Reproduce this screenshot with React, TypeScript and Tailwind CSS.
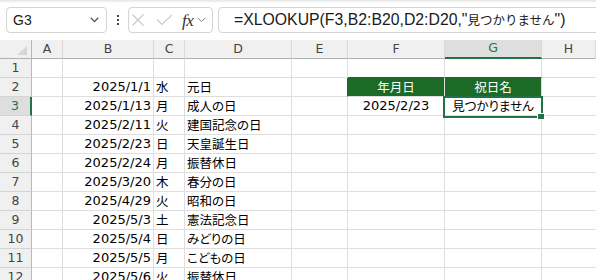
import React from "react";

const cols = ["A", "B", "C", "D", "E", "F", "G", "H"];

const data: [string, string, string][] = [
  ["2025/1/1", "水", "元日"],
  ["2025/1/13", "月", "成人の日"],
  ["2025/2/11", "火", "建国記念の日"],
  ["2025/2/23", "日", "天皇誕生日"],
  ["2025/2/24", "月", "振替休日"],
  ["2025/3/20", "木", "春分の日"],
  ["2025/4/29", "火", "昭和の日"],
  ["2025/5/3", "土", "憲法記念日"],
  ["2025/5/4", "日", "みどりの日"],
  ["2025/5/5", "月", "こどもの日"],
  ["2025/5/6", "火", "振替休日"],
];

const latin = "font-['DejaVu_Sans',sans-serif] text-[13px] text-black";
const cjk = "font-['Noto_Sans_CJK_JP',sans-serif] text-[12.5px] text-black [font-feature-settings:'palt']";
const GREEN = "bg-[#1b6a26]";

function Cell({ children, className = "" }: { children?: React.ReactNode; className?: string }) {
  return (
    <div className={`h-[19px] border-r border-b border-[#dedede] flex items-center overflow-visible whitespace-nowrap leading-[18px] ${className}`}>
      {children}
    </div>
  );
}

export default function App() {
  const rows: React.ReactNode[] = [];
  for (let r = 1; r <= 12; r++) {
    const sel = r === 3;
    rows.push(
      <div
        key={`h${r}`}
        className={`h-[19px] border-b border-[#d4d4d4] flex items-center justify-center font-['DejaVu_Sans',sans-serif] text-[12.5px] ${
          sel
            ? "bg-[#dedede] text-[#217346] border-r-2 border-r-[#217346]"
            : "bg-[#f0f0f0] text-[#444] border-r border-r-[#b8b8b8]"
        }`}
      >
        {r}
      </div>
    );
    const d = r >= 2 ? data[r - 2] : null;
    // A
    rows.push(<Cell key={`a${r}`} />);
    // B
    rows.push(
      <Cell key={`b${r}`} className={`justify-end pr-[2px] ${latin}`}>
        {d ? d[0] : ""}
      </Cell>
    );
    // C
    rows.push(
      <Cell key={`c${r}`} className={`pl-[2px] ${cjk}`}>
        {d ? d[1] : ""}
      </Cell>
    );
    // D
    rows.push(
      <Cell key={`d${r}`} className={`pl-[2px] ${cjk}`}>
        {d ? d[2] : ""}
      </Cell>
    );
    // E
    rows.push(<Cell key={`e${r}`} className={r === 2 ? "border-r-[#1b6a26]" : ""} />);
    // F
    if (r === 1) {
      rows.push(<Cell key={`f${r}`} className="border-b-[#1b6a26]" />);
    } else if (r === 2) {
      rows.push(
        <Cell key={`f${r}`} className={`${GREEN} border-[#1b6a26] justify-center font-['Noto_Sans_CJK_JP',sans-serif] text-[12.5px] text-white`}>
          年月日
        </Cell>
      );
    } else if (r === 3) {
      rows.push(
        <Cell key={`f${r}`} className={`justify-center ${latin}`}>
          2025/2/23
        </Cell>
      );
    } else {
      rows.push(<Cell key={`f${r}`} />);
    }
    // G
    if (r === 1) {
      rows.push(<Cell key={`g${r}`} className="border-b-[#1b6a26]" />);
    } else if (r === 2) {
      rows.push(
        <Cell key={`g${r}`} className={`${GREEN} border-[#1b6a26] justify-center font-['Noto_Sans_CJK_JP',sans-serif] text-[12.5px] text-white`}>
          祝日名
        </Cell>
      );
    } else if (r === 3) {
      rows.push(
        <Cell key={`g${r}`} className={`justify-center ${cjk}`}>
          見つかりません
        </Cell>
      );
    } else {
      rows.push(<Cell key={`g${r}`} />);
    }
    // H
    rows.push(<Cell key={`hh${r}`} className="border-r-0" />);
  }

  return (
    <div className="w-[596px] h-[280px] overflow-hidden bg-white relative">
      {/* top band */}
      <div className="h-[3px] bg-gradient-to-b from-[#e4e4e4] to-white" />
      {/* formula toolbar */}
      <div className="h-[37px] flex items-start pt-[4px]">
        {/* name box */}
        <div className="ml-[6px] w-[101px] h-[26px] border border-[#d4d4d4] rounded-[4px] flex items-center pl-[6px] pr-[6px] bg-white">
          <span className="font-['Liberation_Sans',sans-serif] text-[14px] text-[#1a1a1a] flex-1">G3</span>
          <svg width="9" height="6" viewBox="0 0 9 6" className="mr-[1px]">
            <path d="M0.8 0.8 L4.5 4.6 L8.2 0.8" fill="none" stroke="#4e5a36" strokeWidth="1.3" />
          </svg>
        </div>
        {/* ellipsis */}
        <div className="w-[21px] h-[26px] flex flex-col items-center justify-center gap-[2px]">
          <div className="w-[2px] h-[2px] bg-[#444]" />
          <div className="w-[2px] h-[2px] bg-[#444]" />
          <div className="w-[2px] h-[2px] bg-[#444]" />
        </div>
        {/* function box */}
        <div className="w-[85px] h-[26px] border border-[#d4d4d4] rounded-[4px] flex items-center bg-white">
          <svg width="14" height="14" viewBox="0 0 14 14" className="ml-[2px]">
            <path d="M1.5 1.5 L12.5 12.5 M12.5 1.5 L1.5 12.5" stroke="#c8c8c8" strokeWidth="1.1" fill="none" />
          </svg>
          <svg width="17" height="12" viewBox="0 0 17 12" className="ml-[11px]">
            <path d="M1 5.5 L6 10.5 L16 0.8" stroke="#c8c8c8" strokeWidth="1.1" fill="none" />
          </svg>
          <span className="ml-[9px] font-['Liberation_Serif',serif] italic text-[17px] text-[#333] leading-none tracking-[-0.5px]">
            fx
          </span>
          <svg width="9" height="6" viewBox="0 0 9 6" className="ml-[4px]">
            <path d="M0.8 0.8 L4.5 4.6 L8.2 0.8" fill="none" stroke="#888" strokeWidth="1" />
          </svg>
        </div>
        {/* formula input */}
        <div className="ml-[5px] flex-1 -mr-[6px] h-[26px] border border-[#d4d4d4] rounded-[4px] flex items-center pl-[15px] bg-white whitespace-nowrap">
          <span className="font-['Liberation_Sans','Noto_Sans_CJK_JP',sans-serif] text-[15.8px] text-[#1a1a1a]">
            =XLOOKUP(F3,B2:B20,D2:D20,"
            <span className="font-['Noto_Sans_CJK_JP',sans-serif] text-[12.5px]">見つかりません</span>
            ")
          </span>
        </div>
      </div>

      {/* grid */}
      <div className="relative grid grid-cols-[32px_31px_91px_31px_107px_56px_97px_97px_1fr]">
        {/* header row */}
        <div className="h-[19px] bg-[#f0f0f0] border-r border-b border-r-[#b8b8b8] border-b-[#b0b0b0] flex items-end justify-end pr-[4px] pb-[3px]">
          <svg width="10" height="9" viewBox="0 0 10 9">
            <path d="M10 0 L10 9 L0 9 Z" fill="#d6d6d6" />
          </svg>
        </div>
        {cols.map((c) => {
          const sel = c === "G";
          return (
            <div
              key={c}
              className={`h-[19px] flex items-center justify-center font-['DejaVu_Sans',sans-serif] text-[12.5px] border-r border-r-[#d8d8d8] ${
                sel
                  ? "bg-[#dedede] text-[#217346] border-b-2 border-b-[#217346]"
                  : "bg-[#f0f0f0] text-[#444] border-b border-b-[#b0b0b0]"
              }`}
            >
              {c}
            </div>
          );
        })}
        {rows}

        {/* selected cell G3 */}
        <div className="absolute left-[443px] top-[56px] w-[100px] h-[22px] border-2 border-[#217346] pointer-events-none" />
        <div className="absolute left-[537px] top-[73px] w-[8px] h-[7px] bg-[#217346] border border-white pointer-events-none" />
      </div>
    </div>
  );
}
